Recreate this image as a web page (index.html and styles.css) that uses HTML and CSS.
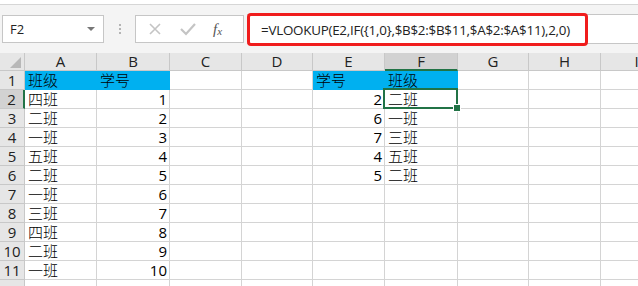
FILE: index.html
```html
<!DOCTYPE html>
<html lang="zh-CN">
<head>
    <meta charset="UTF-8">
    <title>VLOOKUP 反向查找</title>
    <link rel="stylesheet" href="styles.css">
</head>
<body>
    <div class="ribbon-edge"></div>

    <div class="formula-bar">
        <div class="name-box">
            <span>F2</span>
            <span class="caret"></span>
        </div>
        <div class="grip">
            <i></i><i></i><i></i>
        </div>
        <div class="fx-buttons">
            <svg class="btn-icon" width="14" height="14" viewBox="0 0 14 14">
                <path d="M2 2 L12 12 M12 2 L2 12" stroke="#c4c4c4" stroke-width="1.6" fill="none"/>
            </svg>
            <svg class="btn-icon" width="18" height="14" viewBox="0 0 18 14">
                <path d="M2 7 L7 12 L16 2" stroke="#c4c4c4" stroke-width="2.2" fill="none"/>
            </svg>
            <span class="fx">f<sub>x</sub></span>
        </div>
        <div class="formula-input">
            <div class="formula-text">=VLOOKUP(E2,IF({1,0},$B$2:$B$11,$A$2:$A$11),2,0)</div>
        </div>
    </div>

    <div class="sheet" id="sheet"></div>

    <script>
        const cols = ['A', 'B', 'C', 'D', 'E', 'F', 'G', 'H', 'I'];
        const data = {
            1: { A: '班级', B: '学号', E: '学号', F: '班级' },
            2: { A: '四班', B: 1, E: 2, F: '二班' },
            3: { A: '二班', B: 2, E: 6, F: '一班' },
            4: { A: '一班', B: 3, E: 7, F: '三班' },
            5: { A: '五班', B: 4, E: 4, F: '五班' },
            6: { A: '二班', B: 5, E: 5, F: '二班' },
            7: { A: '一班', B: 6 },
            8: { A: '三班', B: 7 },
            9: { A: '四班', B: 8 },
            10: { A: '二班', B: 9 },
            11: { A: '一班', B: 10 }
        };
        const filled = ['A1', 'B1', 'E1', 'F1'];
        const active = 'F2';

        function renderSheet() {
            let html = '<div class="corner"><span></span></div>';
            html += cols.map(c => `<div class="col-head${c === 'F' ? ' current' : ''}">${c}</div>`).join('');

            // row 12 only peeks in at the bottom edge, so its number is left out
            for (let r = 1; r <= 12; r++) {
                html += `<div class="row-head${r === 2 ? ' current' : ''}">${r < 12 ? r : ''}</div>`;
                html += cols.map(c => {
                    const v = data[r] && data[r][c] !== undefined ? data[r][c] : '';
                    const cls = ['cell'];
                    if (typeof v === 'number') cls.push('num');
                    if (filled.includes(c + r)) cls.push('fill');
                    if (c + r === active) cls.push('active');
                    return `<div class="${cls.join(' ')}">${v}</div>`;
                }).join('');
            }
            document.getElementById('sheet').innerHTML = html;
        }

        renderSheet();
    </script>
</body>
</html>
```

FILE: styles.css
```css
body {
    margin: 0;
    width: 638px;
    height: 286px;
    overflow: hidden;
    background: #fff;
    font-family: "Noto Sans CJK SC", "Liberation Sans", sans-serif;
    color: #000;
}

.ribbon-edge {
    height: 4px;
    background: #fff;
    border-bottom: 1px solid #d6d6d6;
}

/* formula bar */
.formula-bar {
    display: flex;
    align-items: center;
    height: 48px;
    background: #f4f4f4;
    padding-left: 2px;
}

.name-box {
    display: flex;
    align-items: center;
    justify-content: space-between;
    box-sizing: border-box;
    width: 102px;
    height: 28px;
    padding: 0 8px 0 7px;
    background: #fff;
    border: 1px solid #c6c6c6;
    font-family: "Open Sans", "Liberation Sans", sans-serif;
    font-size: 13px;
    color: #222;
}

.caret {
    width: 0;
    height: 0;
    border-left: 4px solid transparent;
    border-right: 4px solid transparent;
    border-top: 4px solid #777;
}

.grip {
    display: flex;
    flex-direction: column;
    gap: 2px;
    width: 31px;
    align-items: center;
}

.grip i {
    width: 2px;
    height: 2px;
    background: #b4b4b4;
}

.fx-buttons {
    display: flex;
    align-items: center;
    box-sizing: border-box;
    width: 109px;
    height: 28px;
    background: #fff;
    border: 1px solid #c6c6c6;
    padding-left: 12px;
}

.btn-icon {
    margin-right: 17px;
}

.btn-icon + .btn-icon {
    margin-right: 16px;
}

.fx {
    font-family: "Liberation Serif", serif;
    font-style: italic;
    font-size: 15px;
    color: #555;
}

.fx sub {
    font-size: 11px;
    vertical-align: -1px;
}

.formula-input {
    flex: 1;
    display: flex;
    align-items: center;
    height: 28px;
    margin-left: 3px;
    background: #fff;
    border-top: 1px solid #c6c6c6;
    border-bottom: 1px solid #c6c6c6;
}

.formula-text {
    box-sizing: border-box;
    width: 341px;
    height: 33px;
    padding: 5px 0 0 11px;
    border: 3px solid #f01c1c;
    border-radius: 4px;
    font-family: "Open Sans", "Liberation Sans", sans-serif;
    font-size: 13.4px;
    letter-spacing: -0.25px;
    color: #222;
}

/* grid */
.sheet {
    display: grid;
    grid-template-columns: 25px 72px 73px 72px 71px 72px 73px 71px 72px 72px;
    grid-template-rows: 18px;
    grid-auto-rows: 19px;
    font-size: 15px;
    font-weight: 300;
}

.corner,
.col-head,
.row-head {
    box-sizing: border-box;
    background: #e6e6e6;
    border-right: 1px solid #c8c8c8;
    border-bottom: 1px solid #c8c8c8;
    font-family: "Open Sans", "Liberation Sans", sans-serif;
    font-weight: 400;
    color: #222;
}

.corner {
    position: relative;
}

.corner span {
    position: absolute;
    right: 3px;
    bottom: 2px;
    width: 0;
    height: 0;
    border-left: 11px solid transparent;
    border-bottom: 11px solid #b8b8b8;
}

.col-head {
    text-align: center;
    line-height: 17px;
    font-size: 15px;
}

.col-head.current {
    background: #d2d2d2;
    border-bottom: 2px solid #217346;
}

.row-head {
    text-align: center;
    line-height: 18px;
    font-size: 15px;
}

.row-head.current {
    background: #d2d2d2;
    border-right: 2px solid #217346;
}

.cell {
    box-sizing: border-box;
    border-right: 1px solid #d4d4d4;
    border-bottom: 1px solid #d4d4d4;
    padding: 0 3px;
    line-height: 18px;
    white-space: nowrap;
}

.cell.num {
    text-align: right;
    padding-right: 2px;
    font-family: "Open Sans", "Liberation Sans", sans-serif;
    font-weight: 400;
}

.cell.fill {
    background: #00b0f0;
    border-color: #00b0f0;
}

.cell.active {
    position: relative;
}

.cell.active::after {
    content: "";
    position: absolute;
    left: -2px;
    top: -2px;
    right: -1px;
    bottom: -1px;
    border: 2px solid #217346;
}

.cell.active::before {
    content: "";
    position: absolute;
    right: -4px;
    bottom: -4px;
    width: 6px;
    height: 6px;
    background: #217346;
    border: 1px solid #fff;
    z-index: 1;
}
```
